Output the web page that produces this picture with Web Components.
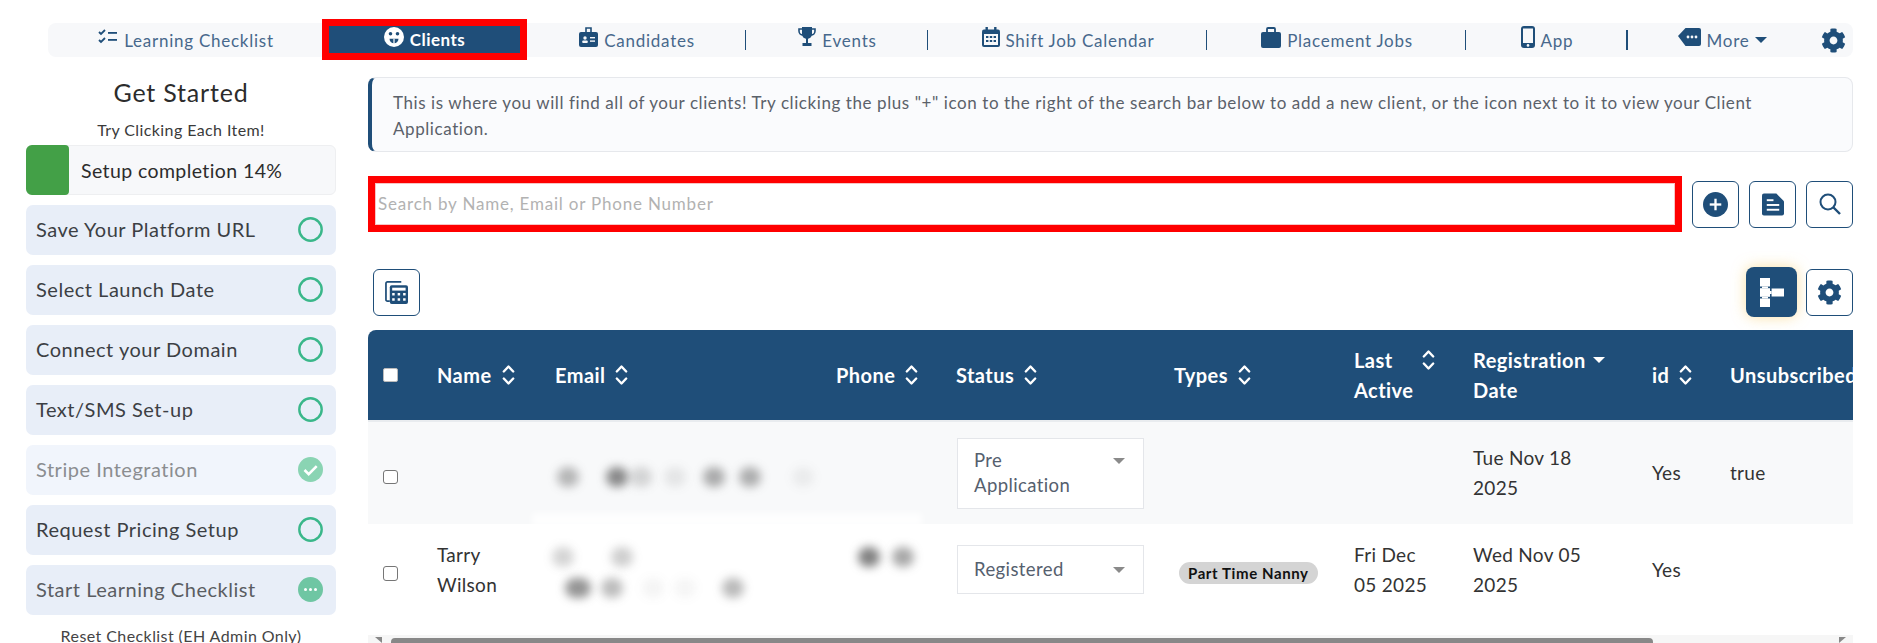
<!DOCTYPE html>
<html lang="en">
<head>
<meta charset="utf-8">
<title>Clients</title>
<style>
html, body { margin: 0; height: 643px; overflow: hidden; background: #fff; }
body { font-family: 'Lato', 'Open Sans', sans-serif; color: #333; }
.page {
    display: grid;
    grid-template-columns: 310px 1485px;
    column-gap: 32px;
    padding: 20px 0 0 26px;
}
</style>
</head>
<body>
<top-nav>
    <nav-link w="274" label="Learning Checklist"><svg-icon slot="icon" name="checklist" w="20" h="16"></svg-icon></nav-link>
    <nav-link w="205" label="Clients" active><svg-icon slot="icon" name="clients" w="20" h="20"></svg-icon></nav-link>
    <nav-link w="218" label="Candidates"><svg-icon slot="icon" name="badge" w="19" h="20"></svg-icon></nav-link>
    <nav-sep></nav-sep>
    <nav-link w="181" label="Events"><svg-icon slot="icon" name="trophy" w="18" h="20"></svg-icon></nav-link>
    <nav-sep></nav-sep>
    <nav-link w="278" label="Shift Job Calendar"><svg-icon slot="icon" name="calendar" w="18" h="20"></svg-icon></nav-link>
    <nav-sep></nav-sep>
    <nav-link w="258" label="Placement Jobs"><svg-icon slot="icon" name="briefcase" w="20" h="21"></svg-icon></nav-link>
    <nav-sep></nav-sep>
    <nav-link w="160" label="App"><svg-icon slot="icon" name="mobile" w="14" h="22"></svg-icon></nav-link>
    <nav-sep thick></nav-sep>
    <nav-link w="187" label="More" caret><svg-icon slot="icon" name="tag" w="23" h="18"></svg-icon></nav-link>
    <nav-gear></nav-gear>
</top-nav>
<div class="page">
    <get-started>
        <check-item state="open">Save Your Platform URL</check-item>
        <check-item state="open">Select Launch Date</check-item>
        <check-item state="open">Connect your Domain</check-item>
        <check-item state="open">Text/SMS Set-up</check-item>
        <check-item state="done">Stripe Integration</check-item>
        <check-item state="open">Request Pricing Setup</check-item>
        <check-item state="busy">Start Learning Checklist</check-item>
    </get-started>
    <main>
        <info-note>This is where you will find all of your clients! Try clicking the plus "+" icon to the right of the search bar below to add a new client, or the icon next to it to view your Client Application.</info-note>
        <search-row></search-row>
        <table-tools></table-tools>
        <client-table></client-table>
    </main>
</div>

<script>
const NAVY = '#1f4e79';

const ICONS = {
    checklist: `<svg viewBox="0 0 20 16"><g fill="none" stroke="currentColor" stroke-width="1.8"><path d="M1 3l2 2 4-4M1 11l2 2 4-4"/></g><rect x="10" y="3" width="9" height="1.8"/><rect x="10" y="10" width="9" height="1.8"/></svg>`,
    clients: `<svg viewBox="0 0 20 20"><circle cx="10" cy="10" r="10" fill="#fff"/><circle cx="6.500" cy="6.800" r="1.800" fill="${NAVY}"/><circle cx="13.500" cy="6.800" r="1.800" fill="${NAVY}"/><path d="M5.500 11.800h9a4.500 4.500 0 0 1-9 0z" fill="${NAVY}"/><rect x="9.400" y="11.800" width="1.200" height="5" fill="#fff"/></svg>`,
    badge: `<svg viewBox="0 0 19 20"><rect y="5" width="19" height="15" rx="2"/><path d="M7 6V1h5v5" fill="none" stroke="currentColor" stroke-width="1.6"/><circle cx="6" cy="11" r="1.7" fill="#f7f8fa"/><rect x="3.2" y="13.6" width="5.6" height="2.4" rx="1" fill="#f7f8fa"/><rect x="11" y="10" width="5" height="1.4" fill="#f7f8fa"/><rect x="11" y="13.4" width="5" height="1.4" fill="#f7f8fa"/></svg>`,
    trophy: `<svg viewBox="0 0 18 20"><path d="M4 0h10v7a5 5 0 0 1-10 0z"/><path d="M4 2H1v2a4 4 0 0 0 4 4M14 2h3v2a4 4 0 0 1-4 4" fill="none" stroke="currentColor" stroke-width="1.6"/><rect x="8" y="11" width="2" height="5"/><rect x="4.5" y="16" width="9" height="3"/></svg>`,
    calendar: `<svg viewBox="0 0 18 20"><rect y="2.5" width="18" height="17.5" rx="2"/><rect x="3.5" width="2.4" height="4"/><rect x="12.1" width="2.4" height="4"/><rect x="2" y="7" width="14" height="11" fill="#f7f8fa"/><g><rect x="4" y="9" width="2.4" height="2"/><rect x="7.8" y="9" width="2.4" height="2"/><rect x="11.6" y="9" width="2.4" height="2"/><rect x="4" y="13" width="2.4" height="2"/><rect x="7.8" y="13" width="2.4" height="2"/><rect x="11.6" y="13" width="2.4" height="2"/></g></svg>`,
    briefcase: `<svg viewBox="0 0 20 21"><rect y="5" width="20" height="16" rx="2"/><path d="M6 6V2a1 1 0 0 1 1-1h6a1 1 0 0 1 1 1v4" fill="none" stroke="currentColor" stroke-width="1.8"/></svg>`,
    mobile: `<svg viewBox="0 0 14 22"><rect width="14" height="22" rx="3"/><rect x="2" y="2.5" width="10" height="14.5" fill="#f7f8fa"/><circle cx="7" cy="19.4" r="1.3" fill="#f7f8fa"/></svg>`,
    tag: `<svg viewBox="0 0 23 18"><path d="M0 8L7.500 0H21a2 2 0 0 1 2 2v14a2 2 0 0 1-2 2H7.500z"/><circle cx="10" cy="9" r="1.400" fill="#f7f8fa"/><circle cx="14" cy="9" r="1.400" fill="#f7f8fa"/><circle cx="18" cy="9" r="1.400" fill="#f7f8fa"/></svg>`,
    gear: `<svg viewBox="0 0 512 512"><path d="M487.4 315.7l-42.6-24.6c4.3-23.2 4.3-47 0-70.2l42.6-24.6c4.900-2.800 7.100-8.600 5.500-14-11.100-35.600-30-67.800-54.700-94.600-3.800-4.100-10-5.100-14.800-2.300L380.800 110c-17.900-15.400-38.500-27.300-60.800-35.100V25.800c0-5.600-3.900-10.500-9.400-11.700-36.700-8.200-74.300-7.800-109.200 0-5.500 1.200-9.400 6.100-9.400 11.700V75c-22.200 7.900-42.800 19.800-60.800 35.100L88.700 85.500c-4.900-2.800-11-1.900-14.800 2.300-24.700 26.700-43.600 58.900-54.700 94.600-1.700 5.400.6 11.200 5.500 14L67.300 221c-4.300 23.200-4.300 47 0 70.200l-42.600 24.600c-4.900 2.800-7.100 8.600-5.500 14 11.100 35.600 30 67.800 54.700 94.600 3.800 4.100 10 5.100 14.800 2.300l42.600-24.600c17.900 15.400 38.500 27.300 60.800 35.100v49.200c0 5.600 3.900 10.500 9.400 11.700 36.700 8.200 74.300 7.800 109.200 0 5.500-1.200 9.400-6.100 9.400-11.700v-49.200c22.200-7.900 42.800-19.800 60.800-35.100l42.600 24.600c4.900 2.800 11 1.900 14.800-2.300 24.700-26.700 43.600-58.900 54.700-94.600 1.500-5.500-.7-11.300-5.600-14.100zM256 336c-44.100 0-80-35.900-80-80s35.900-80 80-80 80 35.900 80 80-35.900 80-80 80z"/></svg>`,
    plus: `<svg viewBox="0 0 26 26"><circle cx="13" cy="13" r="13"/><rect x="7" y="11.800" width="12" height="2.400" fill="#fff"/><rect x="11.800" y="7" width="2.400" height="12" fill="#fff"/></svg>`,
    doc: `<svg viewBox="0 0 23 23"><path d="M2 0h13l8 8v13a2 2 0 0 1-2 2H2a2 2 0 0 1-2-2V2a2 2 0 0 1 2-2z"/><rect x="5" y="6" width="7" height="2" fill="#fff"/><rect x="5" y="11" width="13" height="2" fill="#fff"/><rect x="5" y="16" width="13" height="2" fill="#fff"/></svg>`,
    search: `<svg viewBox="0 0 22 22"><circle cx="9" cy="9" r="7.500" fill="none" stroke="currentColor" stroke-width="2"/><path d="M14.500 14.500L21 21" fill="none" stroke="currentColor" stroke-width="2.400"/></svg>`,
    calc: `<svg viewBox="0 0 24 24"><path d="M5 21H2.500a1.500 1.500 0 0 1-1.500-1.500V2.500A1.500 1.500 0 0 1 2.500 1H17" fill="none" stroke="currentColor" stroke-width="1.800"/><rect x="5" y="4.500" width="19" height="19.500" rx="2"/><rect x="7.500" y="7" width="14" height="3" fill="#fff"/><g fill="#fff"><rect x="7.500" y="12.500" width="2.600" height="2.600"/><rect x="13.200" y="12.500" width="2.600" height="2.600"/><rect x="18.900" y="12.500" width="2.600" height="2.600"/><rect x="7.500" y="18" width="2.600" height="2.600"/><rect x="13.200" y="18" width="2.600" height="2.600"/><rect x="18.900" y="18" width="2.600" height="2.600"/></g></svg>`,
    fork: `<svg viewBox="0 0 24 29"><rect width="10" height="8.500"/><rect x="2" y="8.500" width="6" height="1.700"/><rect y="10.200" width="10" height="8.600"/><rect x="2" y="18.800" width="6" height="1.700"/><rect y="20.500" width="10" height="8.500"/><rect x="10" y="13" width="1.600" height="3"/><rect x="11.600" y="10.500" width="12.400" height="8"/></svg>`
};

class SvgIcon extends HTMLElement {
    connectedCallback() {
        const w = this.getAttribute('w') || 20;
        const h = this.getAttribute('h') || w;
        this.attachShadow({mode: 'open'}).innerHTML = `
            <style>
            :host { display: block; flex: none; width: ${w}px; height: ${h}px; color: inherit; }
            svg { display: block; width: 100%; height: 100%; fill: currentColor; }
            </style>
            ${ICONS[this.getAttribute('name')]}
        `;
    }
}
customElements.define('svg-icon', SvgIcon);

class TopNav extends HTMLElement {
    constructor() {
        super();
        this.attachShadow({mode: 'open'}).innerHTML = `
            <style>
            :host {
                display: flex;
                align-items: center;
                height: 34px;
                margin: 23px 24px 0 48px;
                background: #f7f8fa;
                border-radius: 8px;
            }
            </style>
            <slot></slot>
        `;
    }
}
customElements.define('top-nav', TopNav);

class NavLink extends HTMLElement {
    connectedCallback() {
        const active = this.hasAttribute('active');
        const caret = this.hasAttribute('caret')
            ? '<span class="caret"></span>' : '';
        this.attachShadow({mode: 'open'}).innerHTML = `
            <style>
            :host {
                display: flex;
                flex: none;
                align-items: center;
                justify-content: center;
                gap: 6px;
                box-sizing: border-box;
                width: ${this.getAttribute('w')}px;
                padding-left: 2px;
                color: ${NAVY};
                font-size: 17px;
                letter-spacing: 0.75px;
            }
            :host([active]) {
                height: 41px;
                margin-top: -1px;
                padding-left: 0;
                background: ${NAVY};
                border: 7.5px solid #ff0000;
                color: #fff;
                font-weight: 700;
                letter-spacing: 0.45px;
            }
            ::slotted(svg-icon) { margin-bottom: 6px; }
            .label { color: ${active ? '#fff' : '#47688c'}; }
            .caret {
                width: 0; height: 0;
                margin-left: 0;
                border: 6px solid transparent;
                border-top: 6px solid ${NAVY};
                border-bottom: 0;
            }
            </style>
            <slot name="icon"></slot>
            <span class="label">${this.getAttribute('label')}</span>${caret}
        `;
    }
}
customElements.define('nav-link', NavLink);

class NavSep extends HTMLElement {
    constructor() {
        super();
        this.attachShadow({mode: 'open'}).innerHTML = `
            <style>
            :host { display: block; flex: none; width: 1px; height: 20px; background: ${NAVY}; }
            :host([thick]) { width: 2px; }
            </style>
        `;
    }
}
customElements.define('nav-sep', NavSep);

class NavGear extends HTMLElement {
    constructor() {
        super();
        this.attachShadow({mode: 'open'}).innerHTML = `
            <style>
            :host { display: flex; flex: none; width: 38px; justify-content: flex-start; padding-left: 6px; box-sizing: border-box; color: ${NAVY}; }
            </style>
            <svg-icon name="gear" w="25"></svg-icon>
        `;
    }
}
customElements.define('nav-gear', NavGear);

class GetStarted extends HTMLElement {
    constructor() {
        super();
        this.attachShadow({mode: 'open'}).innerHTML = `
            <style>
            :host { display: flex; flex-direction: column; }
            h2 {
                margin: 0;
                height: 30px;
                line-height: 30px;
                font-size: 25px;
                font-weight: 400;
                letter-spacing: 0.8px;
                text-align: center;
                color: #2c2c2c;
            }
            .hint {
                margin-top: 11px;
                height: 27px;
                line-height: 24px;
                font-size: 16px;
                letter-spacing: 0.4px;
                text-align: center;
                color: #3a3a3a;
            }
            .progress {
                display: flex;
                align-items: center;
                height: 50px;
                box-sizing: border-box;
                margin-bottom: 10px;
                background: #f7f8fa;
                border: 1px solid #eeeff1;
                border-radius: 6px;
                font-size: 19.500px;
                letter-spacing: 0.4px;
                color: #2c2c2c;
            }
            .bar { align-self: stretch; width: 43px; margin: -1px 12px -1px -1px; background: #43a047; border-radius: 6px 4px 4px 6px; }
            .list { display: flex; flex-direction: column; gap: 10px; }
            .reset {
                margin-top: 11px;
                line-height: 20px;
                font-size: 16px;
                letter-spacing: 0.42px;
                text-align: center;
                color: #444;
            }
            </style>
            <h2>Get Started</h2>
            <div class="hint">Try Clicking Each Item!</div>
            <div class="progress"><span class="bar"></span>Setup completion 14%</div>
            <div class="list"><slot></slot></div>
            <div class="reset">Reset Checklist (EH Admin Only)</div>
        `;
    }
}
customElements.define('get-started', GetStarted);

class CheckItem extends HTMLElement {
    connectedCallback() {
        const state = this.getAttribute('state');
        const marks = {
            open: `<circle cx="12.500" cy="12.500" r="11.200" fill="none" stroke="#3ab78a" stroke-width="2.400"/>`,
            done: `<circle cx="12.500" cy="12.500" r="12.500" fill="#8ad4b3"/><path d="M6.500 13l4.200 4.200 8-8" fill="none" stroke="#fff" stroke-width="2.600"/>`,
            busy: `<circle cx="12.500" cy="12.500" r="12.500" fill="#6fc6a3"/><circle cx="7.500" cy="12.500" r="1.500" fill="#fff"/><circle cx="12.500" cy="12.500" r="1.500" fill="#fff"/><circle cx="17.500" cy="12.500" r="1.500" fill="#fff"/>`
        };
        this.attachShadow({mode: 'open'}).innerHTML = `
            <style>
            :host {
                display: flex;
                align-items: center;
                justify-content: space-between;
                height: 50px;
                padding: 0 13px 2px 10px;
                box-sizing: border-box;
                background: #e8eef8;
                border-radius: 7px;
                font-size: 20px;
                letter-spacing: 0.52px;
                color: #3c3f44;
            }
            :host([state="done"]) { background: #f1f5fc; color: #8b8d90; }
            :host([state="busy"]) { color: #5a5d62; }
            svg { display: block; width: 25px; height: 25px; }
            </style>
            <slot></slot>
            <svg viewBox="0 0 25 25">${marks[state]}</svg>
        `;
    }
}
customElements.define('check-item', CheckItem);

class InfoNote extends HTMLElement {
    constructor() {
        super();
        this.attachShadow({mode: 'open'}).innerHTML = `
            <style>
            :host {
                display: block;
                box-sizing: border-box;
                height: 75px;
                padding: 12px 70px 0 21px;
                background: #fafbfd;
                border: 1px solid #e6e8ec;
                border-left: 4px solid ${NAVY};
                border-radius: 8px;
                font-size: 17px;
                line-height: 26px;
                letter-spacing: 0.58px;
                color: #5b616a;
            }
            </style>
            <slot></slot>
        `;
    }
}
customElements.define('info-note', InfoNote);

class IconBtn extends HTMLElement {
    connectedCallback() {
        this.attachShadow({mode: 'open'}).innerHTML = `
            <style>
            :host {
                display: flex;
                flex: none;
                align-items: center;
                justify-content: center;
                box-sizing: border-box;
                width: 47px;
                height: 47px;
                background: #fff;
                border: 1.500px solid ${NAVY};
                border-radius: 6px;
                color: ${NAVY};
            }
            :host([on]) {
                width: 51px;
                height: 50px;
                border: 0;
                border-radius: 8px;
                background: ${NAVY};
                color: #fff;
                box-shadow: 0 0 14px rgba(245, 200, 90, 0.55);
            }
            </style>
            <slot></slot>
        `;
    }
}
customElements.define('icon-btn', IconBtn);

class SearchRow extends HTMLElement {
    constructor() {
        super();
        this.attachShadow({mode: 'open'}).innerHTML = `
            <style>
            :host {
                display: flex;
                align-items: center;
                gap: 10px;
                margin-top: 24px;
                height: 56px;
            }
            .box {
                flex: none;
                box-sizing: border-box;
                width: 1314px;
                height: 56px;
                border: 7.500px solid #ff0000;
                box-shadow: inset 0 0 0 1px #f7c4c4;
                background: #fff;
                padding-left: 3px;
                font-size: 17px;
                line-height: 41px;
                letter-spacing: 0.8px;
                color: #b2b2b2;
            }
            </style>
            <div class="box">Search by Name, Email or Phone Number</div>
            <icon-btn><svg-icon name="plus" w="25"></svg-icon></icon-btn>
            <icon-btn><svg-icon name="doc" w="22" h="23"></svg-icon></icon-btn>
            <icon-btn><svg-icon name="search" w="22"></svg-icon></icon-btn>
        `;
    }
}
customElements.define('search-row', SearchRow);

class TableTools extends HTMLElement {
    constructor() {
        super();
        this.attachShadow({mode: 'open'}).innerHTML = `
            <style>
            :host {
                display: flex;
                align-items: center;
                gap: 9px;
                height: 50px;
                margin-top: 35px;
                padding-left: 5px;
            }
            .left { margin-right: auto; }
            </style>
            <icon-btn class="left"><svg-icon name="calc" w="23"></svg-icon></icon-btn>
            <icon-btn on><svg-icon name="fork" w="24" h="29"></svg-icon></icon-btn>
            <icon-btn><svg-icon name="gear" w="25"></svg-icon></icon-btn>
        `;
    }
}
customElements.define('table-tools', TableTools);

class SortHead extends HTMLElement {
    connectedCallback() {
        const sorted = this.hasAttribute('sorted');
        const two = this.hasAttribute('two');
        const mark = sorted
            ? '<span class="down"></span>'
            : '<svg viewBox="0 0 13 22"><path d="M1.800 7.500L6.500 2.500l4.700 5M1.800 14.500l4.700 5 4.700-5" fill="none" stroke="#fff" stroke-width="2.400" stroke-linecap="round" stroke-linejoin="round"/></svg>';
        this.attachShadow({mode: 'open'}).innerHTML = `
            <style>
            :host { display: inline-flex; align-items: ${two || sorted ? 'flex-start' : 'center'}; gap: ${two ? 9 : 10}px; }
            svg { display: block; flex: none; width: 13px; height: 22px; ${two ? 'margin-top: 4px;' : ''} }
            .down { flex: none; margin-top: 12px; margin-left: -3px; width: 0; height: 0; border: 6.500px solid transparent; border-top: 6.500px solid #fff; border-bottom: 0; }
            </style>
            <span><slot></slot></span>${mark}
        `;
    }
}
customElements.define('sort-head', SortHead);

class StatusSelect extends HTMLElement {
    constructor() {
        super();
        this.attachShadow({mode: 'open'}).innerHTML = `
            <style>
            :host {
                display: flex;
                justify-content: space-between;
                box-sizing: border-box;
                width: 187px;
                margin-left: 1px;
                padding: 9.500px 18px 9.500px 16px;
                background: #fff;
                border: 1px solid #e4e6ea;
                font-size: 18.500px;
                line-height: 25px;
                letter-spacing: 0.4px;
                color: #55606e;
            }
            :host([one]) { padding-top: 11px; padding-bottom: 11px; }
            .caret {
                flex: none;
                margin-top: 10px;
                width: 0; height: 0;
                border: 6px solid transparent;
                border-top: 6px solid #8a8a8a;
                border-bottom: 0;
            }
            </style>
            <span><slot></slot></span><span class="caret"></span>
        `;
    }
}
customElements.define('status-select', StatusSelect);

class TypeChip extends HTMLElement {
    constructor() {
        super();
        this.attachShadow({mode: 'open'}).innerHTML = `
            <style>
            :host {
                display: inline-block;
                height: 22px;
                padding: 0 9px;
                border-radius: 11px;
                background: #d4d4d4;
                font-size: 15px;
                font-weight: 700;
                line-height: 22px;
                letter-spacing: 0.6px;
                color: #111;
                white-space: nowrap;
            }
            </style>
            <slot></slot>
        `;
    }
}
customElements.define('type-chip', TypeChip);

// soft spots lying over the table, where the private details were blurred out
class BlurSmudge extends HTMLElement {
    connectedCallback() {
        const x = +this.getAttribute('x');
        const y = +this.getAttribute('y');
        const w = +(this.getAttribute('w') || 22);
        const h = +(this.getAttribute('h') || 20);
        const a = +this.getAttribute('a');
        const white = this.hasAttribute('white');
        this.attachShadow({mode: 'open'}).innerHTML = `
            <style>
            :host {
                position: absolute;
                left: ${x - w / 2}px;
                top: ${y - h / 2}px;
                width: ${w}px;
                height: ${h}px;
                border-radius: ${white ? 2 : 10}px;
                background: ${white ? 'rgba(255,255,255,0.8)' : `rgba(60,60,60,${a})`};
                filter: blur(${white ? 3 : 5}px);
            }
            </style>
        `;
    }
}
customElements.define('blur-smudge', BlurSmudge);

class ClientTable extends HTMLElement {
    constructor() {
        super();
        const cols = [57, 118, 281, 120, 218, 180, 119, 179, 78, 200];
        this.attachShadow({mode: 'open'}).innerHTML = `
            <style>
            :host { display: block; margin-top: 13px; width: 1485px; }
            .wrap { position: relative; overflow: hidden; border-radius: 8px 0 0 0; }
            table { border-collapse: collapse; table-layout: fixed; width: ${cols.reduce((a, b) => a + b)}px; }
            th, td { padding: 0 12px; text-align: left; }
            th {
                height: 90px;
                background: ${NAVY};
                border-bottom: 2px solid #e9ecef;
                color: #fff;
                font-size: 20px;
                font-weight: 700;
                line-height: 30px;
                letter-spacing: 0.45px;
                white-space: nowrap;
            }
            td { font-size: 19px; line-height: 30px; letter-spacing: 0.3px; color: #333; }
            .r1 td { height: 102px; background: #f8f9fa; }
            .r2 td { box-sizing: border-box; height: 111px; padding-top: 0; padding-bottom: 20px; }
            .check { padding: 0 0 0 15px; }
            .box {
                display: block;
                width: 14.500px;
                height: 14.500px;
                box-sizing: border-box;
                background: #fff;
                border: 1px solid #767676;
                border-radius: 3px;
            }
            th .box { border-color: #bbb; border-radius: 2px; }
            td .box { margin-top: 8px; }
            .r2 td.chip { padding-left: 17px; padding-top: 4px; }
            .scroll {
                display: flex;
                align-items: flex-start;
                height: 8px;
                background: #f6f6f6;
            }
            .arrow { flex: none; margin-top: 2px; width: 0; height: 0; border: 6px solid transparent; border-top: 0; }
            .arrow.l { margin-left: 7px; margin-right: 9px; border-right: 7px solid #888; border-left: 0; }
            .arrow.r { margin-left: auto; margin-right: 7px; border-left: 7px solid #888; border-right: 0; }
            .thumb { flex: none; margin-top: 3px; width: 1262px; height: 8px; background: #888; border-radius: 4px; }
            </style>
            <div class="wrap">
                <table>
                    <colgroup>${cols.map(c => `<col style="width:${c}px">`).join('')}</colgroup>
                    <thead>
                        <tr>
                            <th class="check"><span class="box"></span></th>
                            <th><sort-head>Name</sort-head></th>
                            <th><sort-head>Email</sort-head></th>
                            <th><sort-head>Phone</sort-head></th>
                            <th><sort-head>Status</sort-head></th>
                            <th><sort-head>Types</sort-head></th>
                            <th><sort-head two>Last<br>Active</sort-head></th>
                            <th><sort-head sorted>Registration<br>Date</sort-head></th>
                            <th><sort-head>id</sort-head></th>
                            <th>Unsubscribed</th>
                        </tr>
                    </thead>
                    <tbody>
                        <tr class="r1">
                            <td class="check"><span class="box"></span></td>
                            <td></td>
                            <td></td>
                            <td></td>
                            <td><status-select>Pre<br>Application</status-select></td>
                            <td></td>
                            <td></td>
                            <td>Tue Nov 18<br>2025</td>
                            <td>Yes</td>
                            <td>true</td>
                        </tr>
                        <tr class="r2">
                            <td class="check"><span class="box"></span></td>
                            <td>Tarry<br>Wilson</td>
                            <td></td>
                            <td></td>
                            <td><status-select one>Registered</status-select></td>
                            <td class="chip"><type-chip>Part Time Nanny</type-chip></td>
                            <td>Fri Dec<br>05 2025</td>
                            <td>Wed Nov 05<br>2025</td>
                            <td>Yes</td>
                            <td></td>
                        </tr>
                    </tbody>
                </table>
                <blur-smudge white x="359" y="190" w="390" h="14"></blur-smudge>
                <blur-smudge x="200" y="147" a="0.36"></blur-smudge>
                <blur-smudge x="249" y="147" a="0.6"></blur-smudge>
                <blur-smudge x="273" y="147" a="0.2"></blur-smudge>
                <blur-smudge x="307" y="147" a="0.1"></blur-smudge>
                <blur-smudge x="346" y="147" a="0.42"></blur-smudge>
                <blur-smudge x="382" y="147" a="0.4"></blur-smudge>
                <blur-smudge x="435" y="147" a="0.07"></blur-smudge>
                <blur-smudge x="195" y="227" a="0.22"></blur-smudge>
                <blur-smudge x="254" y="227" a="0.25"></blur-smudge>
                <blur-smudge x="501" y="227" a="0.65"></blur-smudge>
                <blur-smudge x="535" y="227" a="0.45"></blur-smudge>
                <blur-smudge x="210" y="258" w="26" a="0.55"></blur-smudge>
                <blur-smudge x="244" y="258" a="0.34"></blur-smudge>
                <blur-smudge x="285" y="258" a="0.06"></blur-smudge>
                <blur-smudge x="317" y="258" a="0.05"></blur-smudge>
                <blur-smudge x="365" y="258" a="0.36"></blur-smudge>
            </div>
            <div class="scroll"><span class="arrow l"></span><span class="thumb"></span><span class="arrow r"></span></div>
        `;
    }
}
customElements.define('client-table', ClientTable);
</script>
</body>
</html>
